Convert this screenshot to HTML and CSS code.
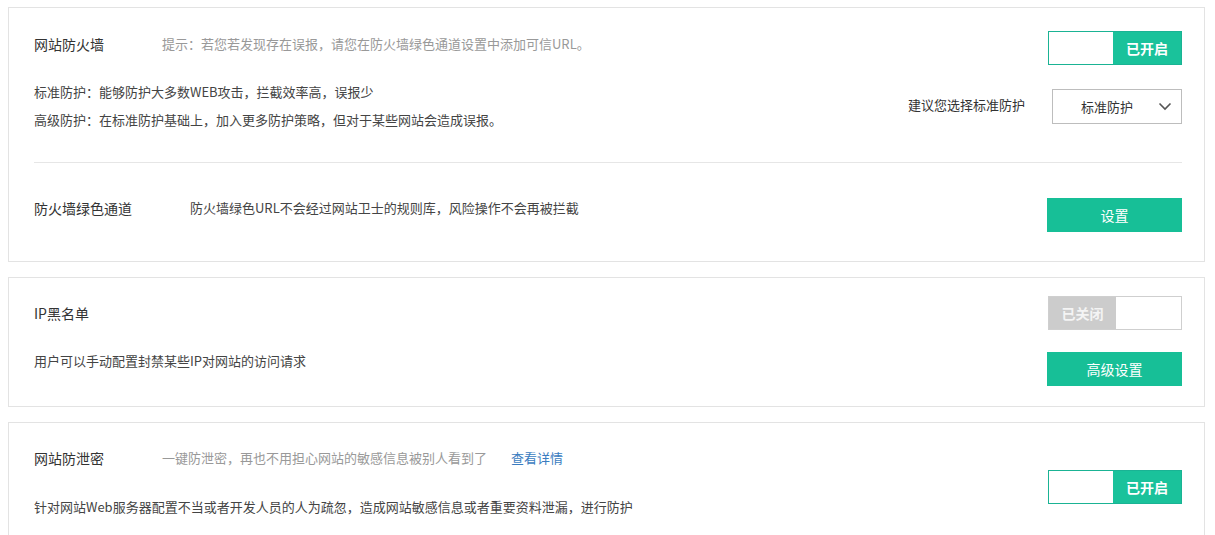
FILE: index.html
```html
<!DOCTYPE html>
<html lang="zh-CN">
<head>
    <meta charset="UTF-8">
    <title>网站防护设置</title>
    <link rel="stylesheet" href="styles.css">
</head>
<body>
    <!-- 网站防火墙 -->
    <div class="card card-waf">
        <div class="head">
            <span class="title">网站防火墙</span>
            <span class="hint">提示：若您若发现存在误报，请您在防火墙绿色通道设置中添加可信URL。</span>
            <div class="switch on"><span class="blank"></span><span class="state">已开启</span></div>
        </div>
        <div class="mode">
            <div class="mode-text">
                <p>标准防护：能够防护大多数WEB攻击，拦截效率高，误报少</p>
                <p>高级防护：在标准防护基础上，加入更多防护策略，但对于某些网站会造成误报。</p>
            </div>
            <span class="suggest">建议您选择标准防护</span>
            <div class="select">
                <span>标准防护</span>
                <svg width="14" height="9" viewBox="0 0 14 9"><path d="M1.5 1.5 L7 7 L12.5 1.5" fill="none" stroke="#555" stroke-width="1.6"/></svg>
            </div>
        </div>
        <div class="divider"></div>
        <div class="row">
            <span class="title wide">防火墙绿色通道</span>
            <span class="desc">防火墙绿色URL不会经过网站卫士的规则库，风险操作不会再被拦截</span>
            <button class="btn">设置</button>
        </div>
    </div>

    <!-- IP黑名单 -->
    <div class="card card-ip">
        <div class="head center">
            <span class="title">IP黑名单</span>
            <div class="switch off"><span class="state">已关闭</span><span class="blank"></span></div>
        </div>
        <div class="row gap">
            <span class="desc plain">用户可以手动配置封禁某些IP对网站的访问请求</span>
            <button class="btn">高级设置</button>
        </div>
    </div>

    <!-- 网站防泄密 -->
    <div class="card card-leak">
        <div class="leak">
            <div class="leak-text">
                <div class="leak-head">
                    <span class="title">网站防泄密</span>
                    <span class="hint">一键防泄密，再也不用担心网站的敏感信息被别人看到了</span>
                    <a class="more" href="#">查看详情</a>
                </div>
                <p>针对网站Web服务器配置不当或者开发人员的人为疏忽，造成网站敏感信息或者重要资料泄漏，进行防护</p>
            </div>
            <div class="switch on"><span class="blank"></span><span class="state">已开启</span></div>
        </div>
    </div>
</body>
</html>
```

FILE: styles.css
```css
body {
    margin: 0;
    padding: 7px 10px 0 8px;
    background: #ffffff;
    font-family: "Microsoft YaHei", "Noto Sans CJK SC", sans-serif;
    font-size: 13px;
    color: #444;
}

p {
    margin: 0;
}

.card {
    border: 1px solid #e3e3e3;
    padding: 23px 22px 29px 25px;
    margin-bottom: 15px;
}

.card-ip {
    padding-top: 18px;
    padding-bottom: 20px;
}

.card-leak {
    padding-top: 25px;
    padding-bottom: 40px;
}

.title {
    width: 128px;
    flex-shrink: 0;
    font-size: 14px;
    line-height: 20px;
    color: #333;
}

.title.wide {
    width: 156px;
}

.hint {
    color: #999;
    line-height: 20px;
}

.head {
    display: flex;
    align-items: flex-start;
}

.head .title,
.head .hint {
    margin-top: 3px;
}

.head.center {
    align-items: center;
}

.head.center .title {
    margin-top: 0;
}

.switch {
    margin-left: auto;
    display: flex;
    width: 134px;
    height: 34px;
    box-sizing: border-box;
    flex-shrink: 0;
}

.switch .blank {
    flex: 1;
    background: #fff;
}

.switch .state {
    width: 68px;
    display: flex;
    align-items: center;
    justify-content: center;
    color: #fff;
    font-weight: bold;
    font-size: 14px;
}

.switch.on {
    border: 1px solid #1ab394;
}

.switch.on .state {
    background: #1ac29b;
}

.switch.off {
    border: 1px solid #cfcfcf;
}

.switch.off .state {
    background: #cccccc;
    color: #f4f4f4;
    width: 67px;
}

.mode {
    display: flex;
    align-items: center;
    margin-top: 13px;
}

.mode-text p {
    line-height: 28px;
}

.suggest {
    margin-left: auto;
    margin-right: 27px;
    color: #333;
    margin-top: -4px;
}

.select {
    width: 130px;
    height: 35px;
    box-sizing: border-box;
    border: 1px solid #bdbdbd;
    display: flex;
    align-items: center;
    padding: 0 9px 0 28px;
    color: #333;
}

.select svg {
    margin-left: auto;
}

.divider {
    height: 1px;
    background: #e6e6e6;
    margin: 28px 0 35px;
}

.row {
    display: flex;
    align-items: flex-start;
}

.row.gap {
    margin-top: 22px;
}

.desc {
    line-height: 20px;
    color: #444;
}

.desc.plain {
    margin-top: -1px;
}

.btn {
    margin-left: auto;
    width: 135px;
    height: 34px;
    border: none;
    background: #17bf97;
    color: #fff;
    font-family: inherit;
    font-size: 14px;
    cursor: pointer;
    flex-shrink: 0;
}

.leak {
    display: flex;
    align-items: flex-end;
}

.leak-head {
    display: flex;
    line-height: 20px;
}

.leak-text p {
    margin-top: 29px;
    line-height: 20px;
}

.more {
    margin-left: 24px;
    color: #3a7cc0;
    text-decoration: none;
}

.leak .switch {
    margin-bottom: 13px;
}
```
